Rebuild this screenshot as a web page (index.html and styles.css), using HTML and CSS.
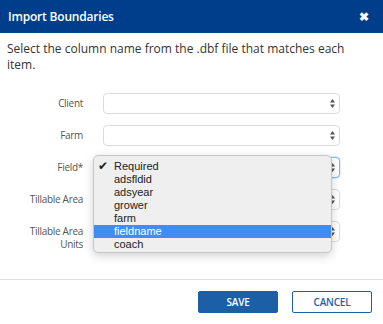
FILE: index.html
```html
<!DOCTYPE html>
<html lang="en">
<head>
    <meta charset="UTF-8">
    <title>Import Boundaries</title>
    <link rel="stylesheet" href="styles.css">
</head>
<body>
    <div class="modal">
        <div class="modal-header">
            <span class="title">Import Boundaries</span>
            <span class="close">&#10006;</span>
        </div>

        <p class="intro">Select the column name from the .dbf file that matches each item.</p>

        <div class="form">
            <label>Client</label>
            <div class="select"><svg class="arrows" width="5" height="9" viewBox="0 0 5 9"><path d="M0 3.5 L2.5 0 L5 3.5 Z M0 5.5 L2.5 9 L5 5.5 Z"/></svg></div>
            <label>Farm</label>
            <div class="select"><svg class="arrows" width="5" height="9" viewBox="0 0 5 9"><path d="M0 3.5 L2.5 0 L5 3.5 Z M0 5.5 L2.5 9 L5 5.5 Z"/></svg></div>
            <label>Field*</label>
            <div class="select focus"><svg class="arrows" width="5" height="9" viewBox="0 0 5 9"><path d="M0 3.5 L2.5 0 L5 3.5 Z M0 5.5 L2.5 9 L5 5.5 Z"/></svg></div>
            <label>Tillable Area</label>
            <div class="select"><svg class="arrows" width="5" height="9" viewBox="0 0 5 9"><path d="M0 3.5 L2.5 0 L5 3.5 Z M0 5.5 L2.5 9 L5 5.5 Z"/></svg></div>
            <label>Tillable Area<br>Units</label>
            <div class="select"><svg class="arrows" width="5" height="9" viewBox="0 0 5 9"><path d="M0 3.5 L2.5 0 L5 3.5 Z M0 5.5 L2.5 9 L5 5.5 Z"/></svg></div>
        </div>

        <div class="modal-footer">
            <button class="btn save">SAVE</button>
            <button class="btn cancel">CANCEL</button>
        </div>

        <ul class="menu">
            <li><span class="check">&#10004;</span>Required</li>
            <li>adsfldid</li>
            <li>adsyear</li>
            <li>grower</li>
            <li>farm</li>
            <li class="active">fieldname</li>
            <li>coach</li>
        </ul>
    </div>
</body>
</html>
```

FILE: styles.css
```css
body { margin: 0; font-family: "Open Sans", "Liberation Sans", sans-serif; background: #fff; }
.modal { position: relative; width: 383px; height: 324px; overflow: hidden; }

.modal-header { height: 33px; background: #003e8c; color: #fff; display: flex; align-items: center; justify-content: space-between; padding: 0 14px 0 8px; }
.title { font-size: 12px; font-weight: 600; letter-spacing: -0.2px; }
.close { font-size: 12px; font-weight: bold; }

.intro { margin: 0; padding: 8px 26px 0 7px; font-size: 12px; line-height: 16px; color: #333; }

.form { display: grid; grid-template-columns: 83px 237px; grid-auto-rows: 21px; column-gap: 20px; row-gap: 11px; margin-top: 20px; }
.form label { font-size: 10px; letter-spacing: -0.3px; color: #555; text-align: right; line-height: 13px; padding-top: 4px; }
.select { position: relative; border: 1px solid #dcdcdc; border-radius: 4px; background: #fff; box-sizing: border-box; }
.select.focus { border-color: #8ab4e8; box-shadow: 0 0 2px #9cc2f0; }
.arrows { position: absolute; right: 4px; top: 5px; fill: #555; }

.modal-footer { position: absolute; left: 0; right: 0; top: 279px; border-top: 1px solid #e2e2e2; display: flex; justify-content: flex-end; gap: 14px; padding: 11px 11px 0 0; }
.btn { width: 80px; height: 22px; font-family: "Open Sans", sans-serif; font-size: 10px; font-weight: 600; letter-spacing: -0.2px; border-radius: 2px; cursor: pointer; }
.save { background: #1b5fa6; color: #fff; border: 1px solid #1b5fa6; }
.cancel { background: #fff; color: #1b5fa6; border: 1px solid #1b5fa6; }

.menu { position: absolute; left: 93px; top: 155px; width: 239px; height: 98px; margin: 0; padding: 4px 0 0; box-sizing: border-box; list-style: none; background: #efefef; border: 1px solid #c6c6c6; border-radius: 5px; box-shadow: 0 3px 10px rgba(0, 0, 0, 0.18); font-family: "Liberation Sans", Arial, sans-serif; font-size: 11px; color: #222; }
.menu li { position: relative; height: 13px; line-height: 13px; padding-left: 20px; }
.menu li.active { background: #3f8df3; color: #fff; }
.check { position: absolute; left: 4px; top: 0; font-size: 12px; }
```
